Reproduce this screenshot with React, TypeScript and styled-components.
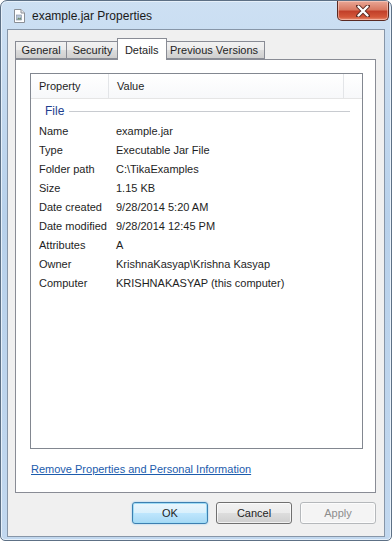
import React from "react";
import styled, { createGlobalStyle } from "styled-components";

const Global = createGlobalStyle`
  html, body { margin: 0; padding: 0; background: #ffffff; }
  body { font-family: "Liberation Sans", Arial, sans-serif; font-size: 11px; color: #1e1e1e; }
  * { box-sizing: border-box; }
`;

const Window = styled.div`
  width: 392px;
  height: 541px;
  border: 1px solid #5d7085;
  border-radius: 7px 7px 5px 5px;
  background: linear-gradient(180deg, #cde0f3 0%, #b8d1eb 40%, #c2d8ef 100%);
  display: flex;
  flex-direction: column;
  overflow: hidden;
  box-shadow: inset 0 0 0 1px #e6f0fa;
`;

const TitleBar = styled.div`
  height: 28px;
  display: flex;
  align-items: flex-start;
  padding-left: 11px;
`;

const TitleIcon = styled.svg`
  width: 14px;
  height: 14px;
  margin-top: 8px;
  flex: none;
`;

const TitleText = styled.div`
  margin-left: 6px;
  margin-top: 8px;
  font-size: 12px;
  color: #1a1a1a;
`;

const CloseButton = styled.div`
  margin-left: auto;
  margin-right: 2px;
  width: 52px;
  height: 20px;
  border: 1px solid #5a2a22;
  border-top: none;
  border-radius: 0 0 5px 5px;
  background: linear-gradient(180deg, #e9a796 0%, #d97a63 45%, #c2402a 55%, #d4583a 85%, #e7937a 100%);
  display: flex;
  align-items: center;
  justify-content: center;
  box-shadow: inset 0 0 0 1px rgba(255, 220, 210, 0.5);
`;

const Client = styled.div`
  flex: 1;
  margin: 0 6px 3px 6px;
  background: #f0f0f0;
  border: 1px solid #8796a8;
  display: flex;
  flex-direction: column;
`;

const TabBar = styled.div`
  display: flex;
  align-items: flex-end;
  padding: 6px 0 0 7px;
  height: 29px;
  position: relative;
  z-index: 1;
`;

const Tab = styled.div<{ $active?: boolean }>`
  height: ${(p) => (p.$active ? "22px" : "18px")};
  padding: 0 ${(p) => (p.$active ? "7px" : "5.5px")};
  margin: ${(p) => (p.$active ? "0 -2px" : "0")};
  margin-bottom: ${(p) => (p.$active ? "-1px" : "0")};
  border: 1px solid #898c95;
  border-bottom: ${(p) => (p.$active ? "none" : "1px solid #898c95")};
  border-left-width: ${(p) => (p.$active ? "1px" : "0")};
  background: ${(p) =>
    p.$active ? "#ffffff" : "linear-gradient(180deg, #f2f2f2 0%, #ebebeb 50%, #dddddd 51%, #cfcfcf 100%)"};
  display: flex;
  align-items: center;
  font-size: 11px;
  color: #1e1e1e;
  position: relative;
  z-index: ${(p) => (p.$active ? 2 : 1)};
  &:first-child { border-left-width: 1px; }
`;

const TabPage = styled.div`
  height: 434px;
  margin: 0 8px 0 7px;
  background: #ffffff;
  border: 1px solid #898c95;
  padding: 13px 12px 0 14px;
  display: flex;
  flex-direction: column;
`;

const ListBox = styled.div`
  height: 376px;
  border: 1px solid #828790;
  background: #ffffff;
  display: flex;
  flex-direction: column;
`;

const HeaderRow = styled.div`
  height: 25px;
  display: grid;
  grid-template-columns: 78px 235px 1fr;
  background: linear-gradient(180deg, #ffffff 0%, #f7f8fa 100%);
  border-bottom: 1px solid #e5e5e5;
`;

const HeaderCell = styled.div<{ $last?: boolean }>`
  display: flex;
  align-items: center;
  padding-left: ${(p) => (p.$last ? "0" : "8px")};
  border-right: ${(p) => (p.$last ? "none" : "1px solid #e3e5e8")};
  color: #1e1e1e;
`;

const GroupRow = styled.div`
  height: 22px;
  display: flex;
  align-items: center;
  padding: 0 12px 0 14px;
  margin-top: 1px;
`;

const GroupLabel = styled.span`
  color: #1e3f8f;
  font-size: 12px;
  margin-right: 5px;
`;

const GroupLine = styled.div`
  flex: 1;
  height: 1px;
  background: #c8cbd0;
`;

const Rows = styled.div`
  display: flex;
  flex-direction: column;
`;

const Row = styled.div`
  height: 18.9px;
  display: grid;
  grid-template-columns: 77px 1fr;
  align-items: center;
  padding-left: 8px;
  color: #1e1e1e;
  white-space: nowrap;
`;

const Link = styled.a`
  margin-top: 14px;
  margin-left: 1px;
  color: #1c5cad;
  text-decoration: underline;
  font-size: 11px;
  cursor: pointer;
`;

const ButtonRow = styled.div`
  display: flex;
  justify-content: flex-end;
  gap: 8px;
  padding: 9px 8px 0 0;
`;

const Button = styled.div<{ $variant?: "default" | "normal" | "disabled" }>`
  width: 76px;
  height: 22px;
  border-radius: 3px;
  display: flex;
  align-items: center;
  justify-content: center;
  font-size: 11px;
  border: 1px solid
    ${(p) => (p.$variant === "default" ? "#3c7fb1" : p.$variant === "disabled" ? "#b5b8bb" : "#707070")};
  color: ${(p) => (p.$variant === "disabled" ? "#8d8d8d" : "#1e1e1e")};
  background: ${(p) =>
    p.$variant === "disabled"
      ? "#f4f4f4"
      : p.$variant === "default"
      ? "linear-gradient(180deg, #eaf6fd 0%, #d9f0fc 50%, #bee6fd 51%, #a7d9f5 100%)"
      : "linear-gradient(180deg, #f2f2f2 0%, #ebebeb 50%, #dddddd 51%, #cfcfcf 100%)"};
  box-shadow: ${(p) =>
    p.$variant === "default" ? "inset 0 0 0 1px #9fdcf6, 0 0 2px #86c6ee" : "inset 0 0 0 1px rgba(255,255,255,0.7)"};
`;

const rows: [string, string][] = [
  ["Name", "example.jar"],
  ["Type", "Executable Jar File"],
  ["Folder path", "C:\\TikaExamples"],
  ["Size", "1.15 KB"],
  ["Date created", "9/28/2014 5:20 AM"],
  ["Date modified", "9/28/2014 12:45 PM"],
  ["Attributes", "A"],
  ["Owner", "KrishnaKasyap\\Krishna  Kasyap"],
  ["Computer", "KRISHNAKASYAP (this computer)"],
];

export default function App() {
  return (
    <>
      <Global />
      <Window>
        <TitleBar>
          <TitleIcon viewBox="0 0 14 14">
            <path d="M2.5 0.5 H9 L12.5 4 V13.5 H2.5 Z" fill="#ffffff" stroke="#8a8f96" />
            <path d="M9 0.5 V4 H12.5" fill="#e8e8e8" stroke="#8a8f96" />
            <rect x="4.5" y="6" width="5" height="5" fill="#b9c7d8" stroke="#7f8ea3" strokeWidth="0.6" />
            <path d="M5 10.5 L6.5 8.5 L7.6 9.6 L8.6 8.3 L9.3 10.5 Z" fill="#6d8a6a" />
          </TitleIcon>
          <TitleText>example.jar Properties</TitleText>
          <CloseButton>
            <svg width="14" height="12" viewBox="0 0 14 12">
              <path
                d="M2 1 L12 11 M12 1 L2 11"
                stroke="#5a2a22"
                strokeWidth="4"
                strokeLinecap="round"
                fill="none"
              />
              <path d="M2.5 1.5 L11.5 10.5 M11.5 1.5 L2.5 10.5" stroke="#ffffff" strokeWidth="2.4" strokeLinecap="round" />
            </svg>
          </CloseButton>
        </TitleBar>
        <Client>
          <TabBar>
            <Tab>General</Tab>
            <Tab>Security</Tab>
            <Tab $active>Details</Tab>
            <Tab>Previous Versions</Tab>
          </TabBar>
          <TabPage>
            <ListBox>
              <HeaderRow>
                <HeaderCell>Property</HeaderCell>
                <HeaderCell>Value</HeaderCell>
                <HeaderCell $last />
              </HeaderRow>
              <GroupRow>
                <GroupLabel>File</GroupLabel>
                <GroupLine />
              </GroupRow>
              <Rows>
                {rows.map(([k, v]) => (
                  <Row key={k}>
                    <span>{k}</span>
                    <span>{v}</span>
                  </Row>
                ))}
              </Rows>
            </ListBox>
            <Link>Remove Properties and Personal Information</Link>
          </TabPage>
          <ButtonRow>
            <Button $variant="default">OK</Button>
            <Button $variant="normal">Cancel</Button>
            <Button $variant="disabled">Apply</Button>
          </ButtonRow>
        </Client>
      </Window>
    </>
  );
}
